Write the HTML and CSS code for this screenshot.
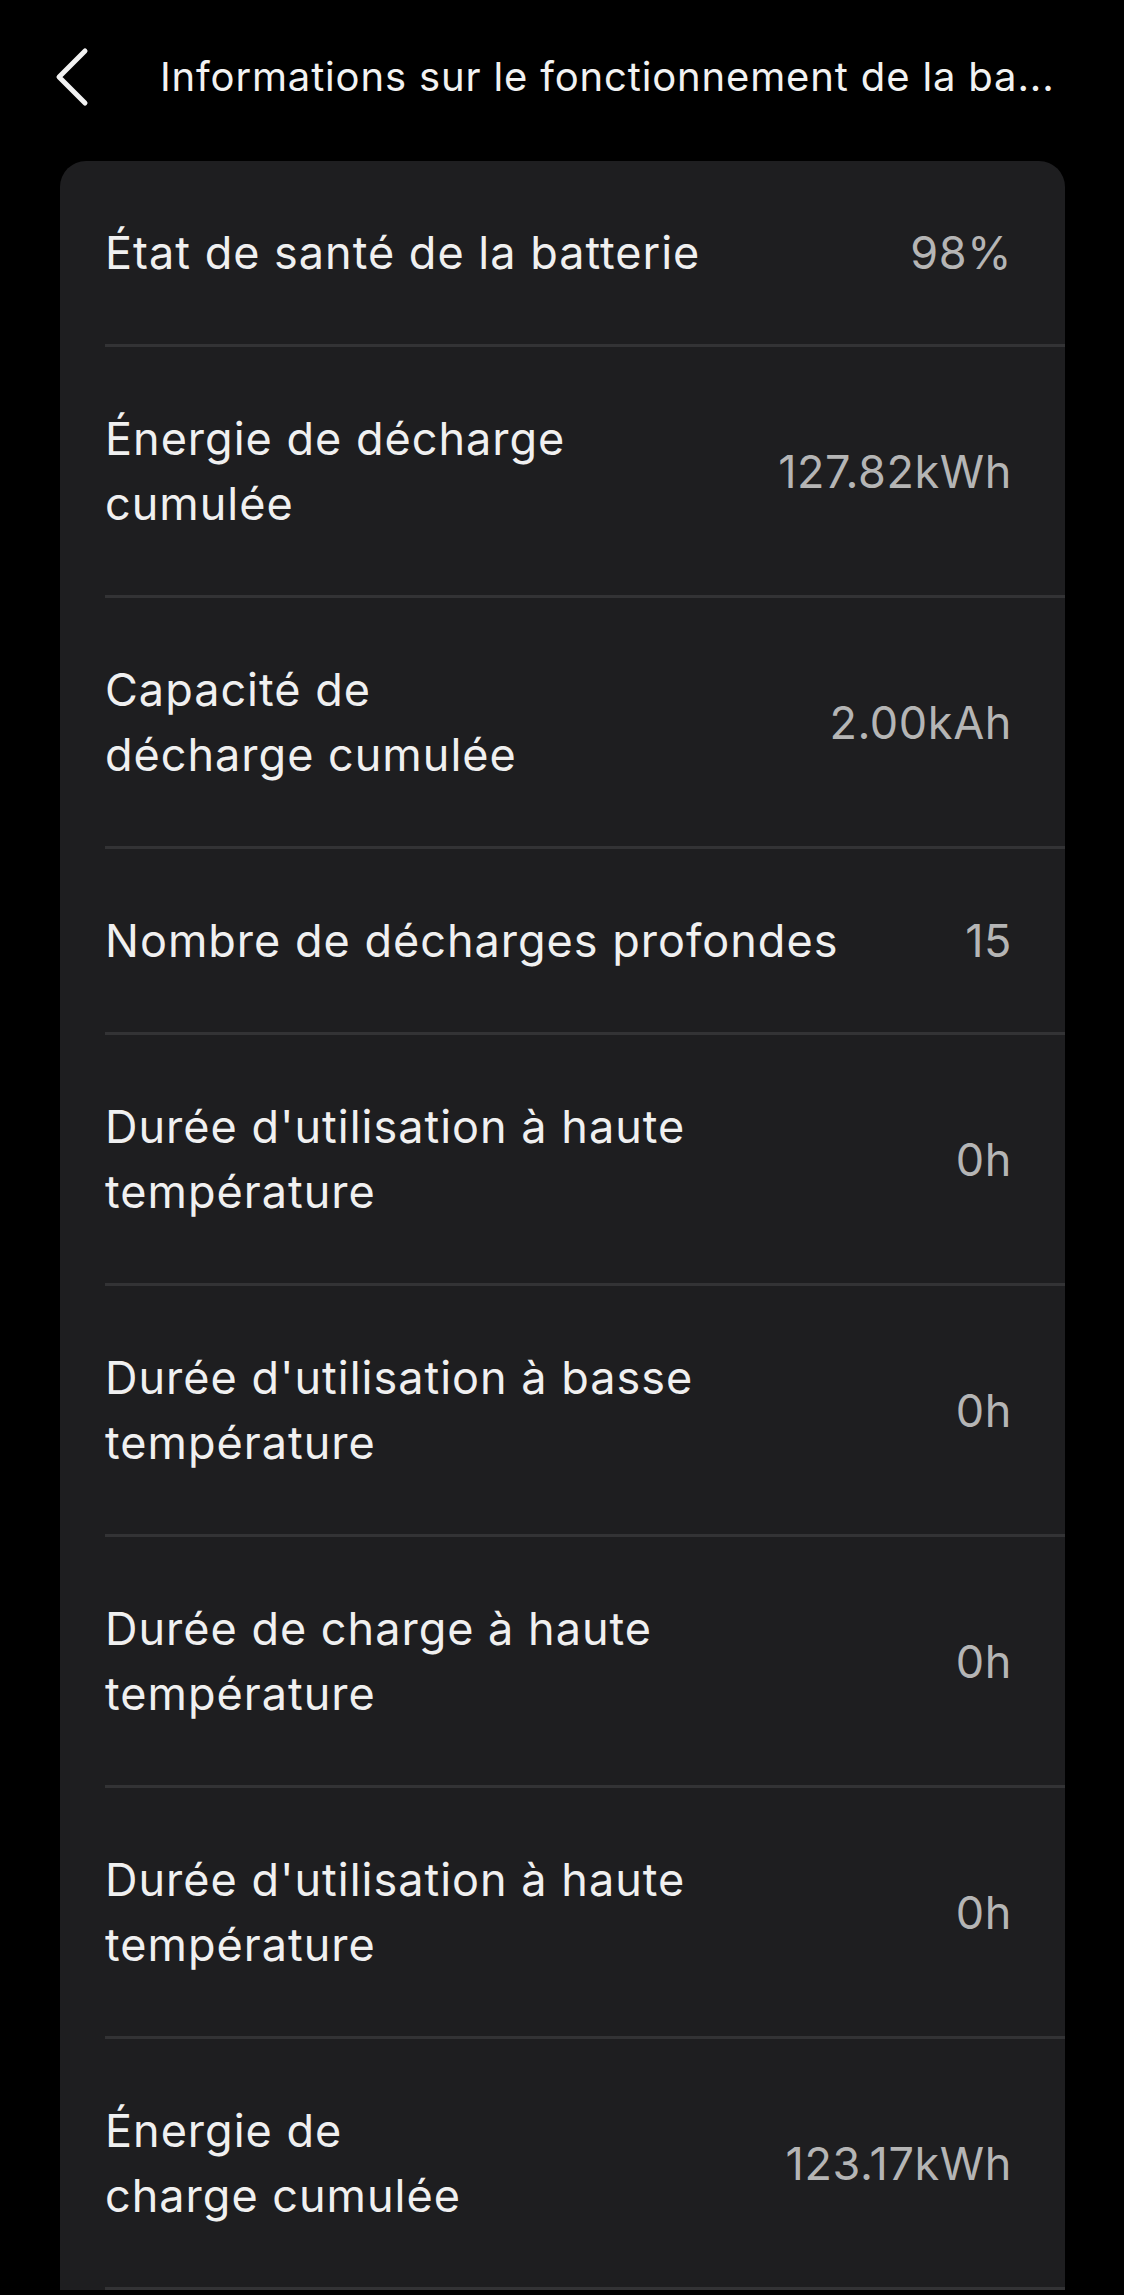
FILE: index.html
```html
<!DOCTYPE html>
<html lang="fr">
<head>
	<meta charset="UTF-8">
	<title>Informations sur le fonctionnement de la batterie</title>
	<link rel="stylesheet" href="styles.css">
</head>
<body>
	<div class="header">
		<a href="javascript:;" class="back">
			<svg width="40" height="64" viewBox="0 0 40 64">
				<polyline points="31,6 5,32 31,58" fill="none" stroke="#f2f2f2" stroke-width="5" stroke-linecap="round" stroke-linejoin="round"/>
			</svg>
		</a>
		<div class="title" title="Informations sur le fonctionnement de la batterie">Informations sur le fonctionnement de la ba...</div>
	</div>

	<div class="card">
		<div class="row">
			<div class="label">État de santé de la batterie</div>
			<div class="value">98%</div>
		</div>
		<div class="row">
			<div class="label">Énergie de décharge<br>cumulée</div>
			<div class="value">127.82kWh</div>
		</div>
		<div class="row">
			<div class="label">Capacité de<br>décharge cumulée</div>
			<div class="value">2.00kAh</div>
		</div>
		<div class="row">
			<div class="label">Nombre de décharges profondes</div>
			<div class="value">15</div>
		</div>
		<div class="row">
			<div class="label">Durée d'utilisation à haute<br>température</div>
			<div class="value">0h</div>
		</div>
		<div class="row">
			<div class="label">Durée d'utilisation à basse<br>température</div>
			<div class="value">0h</div>
		</div>
		<div class="row">
			<div class="label">Durée de charge à haute<br>température</div>
			<div class="value">0h</div>
		</div>
		<div class="row">
			<div class="label">Durée d'utilisation à haute<br>température</div>
			<div class="value">0h</div>
		</div>
		<div class="row">
			<div class="label">Énergie de<br>charge cumulée</div>
			<div class="value">123.17kWh</div>
		</div>
	</div>
</body>
</html>
```

FILE: styles.css
```css
body {
	margin: 0;
	background: #000;
	font-family: Inter, Roboto, "Noto Sans", sans-serif;
	color: #f0f0f0;
}
.header {
	display: flex;
	align-items: center;
	box-sizing: border-box;
	height: 161px;
	padding: 0 40px 8px 54px;
}
.back {
	display: block;
	width: 40px;
	height: 64px;
	margin-right: 66px;
}
.back svg {
	display: block;
}
.title {
	flex: 1;
	font-size: 40px;
	letter-spacing: 0.85px;
	white-space: nowrap;
	color: #f2f2f2;
}
.card {
	margin: 0 59px 0 60px;
	background: #1e1e20;
	border-radius: 26px 26px 0 0;
	padding-left: 45px;
}
.row {
	display: flex;
	align-items: center;
	justify-content: space-between;
	padding: 59px 53px 59px 0;
	border-bottom: 3px solid #333335;
}
.label {
	font-size: 45px;
	line-height: 65px;
	letter-spacing: 1px;
	color: #f0f0f0;
}
.value {
	font-size: 45px;
	line-height: 65px;
	letter-spacing: 0.6px;
	color: #b5b5b5;
	white-space: nowrap;
}
```
